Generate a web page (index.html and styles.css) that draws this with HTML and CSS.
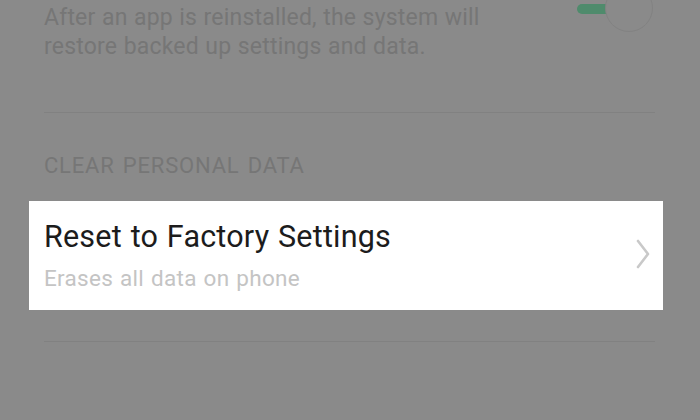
FILE: index.html
```html
<!DOCTYPE html>
<html lang="en">
<head>
<meta charset="utf-8">
<title>Backup and Reset</title>
<link rel="stylesheet" href="styles.css">
</head>
<body>
<main class="screen">
  <section class="item item-toggle">
    <p class="desc">After an app is reinstalled, the system will<br>restore backed up settings and data.</p>
    <div class="switch" aria-hidden="true">
      <span class="track"></span>
      <span class="knob"></span>
    </div>
  </section>
  <h2 class="group-title">CLEAR PERSONAL DATA</h2>
  <section class="row-wrap">
    <div class="row-highlight">
      <div class="row-text">
        <div class="row-title">Reset to Factory Settings</div>
        <div class="row-sub">Erases all data on phone</div>
      </div>
      <svg class="chevron" width="14" height="30" viewBox="0 0 14 30" aria-hidden="true">
        <path d="M2 2 L12 15 L2 28" fill="none" stroke="#c9c9c9" stroke-width="2.6" stroke-linecap="round" stroke-linejoin="round"/>
      </svg>
    </div>
  </section>
  <div class="divider"></div>
</main>
</body>
</html>
```

FILE: styles.css
```css
html, body {
  margin: 0;
  padding: 0;
}
body {
  background: #8a8a8a;
  font-family: Roboto, "Noto Sans", "Liberation Sans", sans-serif;
  width: 700px;
  height: 420px;
  overflow: hidden;
}
.screen {
  display: flex;
  flex-direction: column;
}
.item {
  margin: 0 45px 0 44px;
  padding: 3px 0 51px;
  border-bottom: 1px solid #818181;
  display: flex;
  justify-content: space-between;
  align-items: flex-start;
}
.desc {
  margin: 0;
  font-size: 23px;
  line-height: 29px;
  letter-spacing: 0.2px;
  word-spacing: 0.5px;
  color: #767676;
}
.switch {
  position: relative;
  width: 76px;
  height: 48px;
  margin-top: -19px;
  margin-right: 2px;
  flex-shrink: 0;
}
.track {
  position: absolute;
  left: 0;
  top: 20px;
  width: 44px;
  height: 10px;
  border-radius: 5px;
  background: #4f8b6c;
}
.knob {
  position: absolute;
  right: 0;
  top: 0;
  width: 46px;
  height: 46px;
  border-radius: 50%;
  background: #8a8a8a;
  border: 1px solid #828282;
}
.group-title {
  margin: 40px 45px 23px 44px;
  font-size: 22px;
  line-height: 25px;
  font-weight: 400;
  letter-spacing: 0.8px;
  word-spacing: 2px;
  color: #767676;
}
.row-wrap {
  padding: 0 37px 0 29px;
}
.row-highlight {
  background: #ffffff;
  height: 109px;
  box-sizing: border-box;
  padding: 18px 13px 0 15px;
  display: flex;
  justify-content: space-between;
  align-items: flex-start;
}
.row-title {
  font-size: 30.5px;
  line-height: 36px;
  letter-spacing: 0.2px;
  word-spacing: 1px;
  color: #1c1c1c;
}
.row-sub {
  margin-top: 10px;
  font-size: 22.5px;
  line-height: 26px;
  letter-spacing: 0.3px;
  word-spacing: 1px;
  color: #c4c4c4;
}
.chevron {
  margin-top: 20px;
}
.divider {
  margin: 31px 45px 0 44px;
  height: 1px;
  background: #818181;
}
```
